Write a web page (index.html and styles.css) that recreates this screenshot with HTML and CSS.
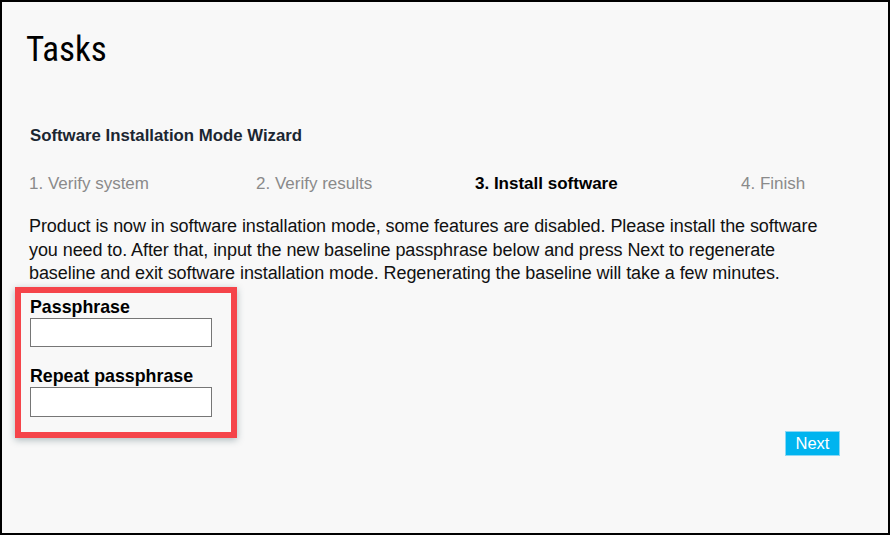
FILE: index.html
```html
<!DOCTYPE html>
<html lang="en">
<head>
<meta charset="utf-8">
<title>Tasks</title>
<link rel="stylesheet" href="styles.css">
</head>
<body>
<div class="frame">
  <h1 class="page-title">Tasks</h1>
  <h2 class="wizard-title">Software Installation Mode Wizard</h2>
  <ol class="steps">
    <li class="step">1. Verify system</li>
    <li class="step">2. Verify results</li>
    <li class="step step-active">3. Install software</li>
    <li class="step">4. Finish</li>
  </ol>
  <p class="intro">Product is now in software installation mode, some features are disabled. Please install the software you need to. After that, input the new baseline passphrase below and press Next to regenerate baseline and exit software installation mode. Regenerating the baseline will take a few minutes.</p>
  <div class="form-row">
    <div class="highlight">
      <label class="field-label" for="pass1">Passphrase</label>
      <input class="field-input input-first" id="pass1" type="password">
      <label class="field-label label-second" for="pass2">Repeat passphrase</label>
      <input class="field-input input-second" id="pass2" type="password">
    </div>
    <button class="next-btn" type="button">Next</button>
  </div>
</div>
</body>
</html>
```
FILE: styles.css
```css
html, body {
  margin: 0;
  padding: 0;
}

body {
  font-family: "Liberation Sans", Arial, sans-serif;
  background: #f8f8f8;
}

.frame {
  box-sizing: border-box;
  width: 890px;
  height: 535px;
  border: 2px solid #000;
  background: #f8f8f8;
  padding: 28px 40px 0 27px;
  overflow: hidden;
}

.page-title {
  margin: 0 0 0 -3px;
  font-family: "Roboto Condensed", "Liberation Sans", sans-serif;
  font-weight: 400;
  font-size: 35px;
  line-height: 40px;
  color: #000;
}

.wizard-title {
  margin: 56px 0 0 1px;
  font-size: 16.8px;
  line-height: 20px;
  font-weight: 700;
  color: #1b2631;
}

.steps {
  list-style: none;
  margin: 28px 0 0 0;
  padding: 0;
  display: grid;
  grid-template-columns: 227px 219px 266px auto;
  font-size: 17px;
  line-height: 20px;
  color: #8a8a8a;
}

.step-active {
  color: #000;
  font-weight: 700;
}

.intro {
  margin: 21px 0 0 0;
  max-width: 800px;
  font-size: 18px;
  line-height: 23.5px;
  letter-spacing: -0.08px;
  color: #111;
}

.form-row {
  display: flex;
  align-items: flex-start;
  margin: 1px 0 0 -14px;
}

.highlight {
  width: 222px;
  box-sizing: border-box;
  border: 6px solid #f5444a;
  padding: 4px 19px 15px 9px;
  box-shadow: 0 2px 7px rgba(60, 90, 100, 0.4);
  display: flex;
  flex-direction: column;
}

.field-label {
  display: block;
  font-size: 17.8px;
  font-weight: 700;
  color: #000;
  line-height: 20px;
}

.label-second {
  margin-top: 19px;
}

.field-input {
  display: block;
  box-sizing: border-box;
  width: 182px;
  margin: 1px 0 0 0;
  padding: 2px 4px;
  border: 1px solid #767676;
  background: #fff;
  font-family: "Liberation Sans", Arial, sans-serif;
  font-size: 14px;
}

.input-first {
  height: 29px;
}

.input-second {
  height: 30px;
}

.next-btn {
  margin: 144px 8px 0 auto;
  width: 55px;
  height: 25px;
  box-sizing: border-box;
  padding: 0;
  border: 1px solid #8ad8f5;
  background: #00b4ef;
  color: #fff;
  font-family: "Liberation Sans", Arial, sans-serif;
  font-size: 16.5px;
  line-height: 23px;
  cursor: pointer;
}
```
